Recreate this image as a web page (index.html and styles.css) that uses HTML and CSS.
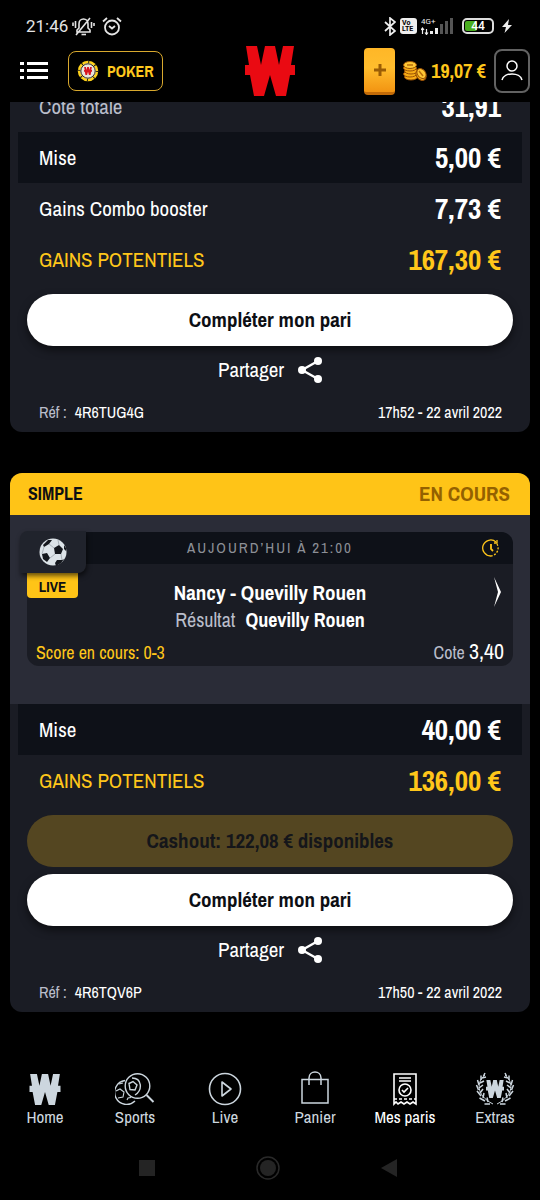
FILE: index.html
```html
<!DOCTYPE html>
<html lang="fr">
<head>
<meta charset="utf-8">
<meta name="viewport" content="width=device-width, initial-scale=1">
<title>Mes paris</title>
<link rel="stylesheet" href="styles.css">
</head>
<body>
<svg class="defs" aria-hidden="true">
  <symbol id="logo" viewBox="0 0 50 50">
    <path d="M1 0H12L16 19L20 0H30L34 19L38 0H49L46 19H50V29H45L41 50H31L25 29L19 50H9L5 29H0V19H4Z"/>
  </symbol>
  <symbol id="share" viewBox="0 0 24 26">
    <path d="M20 4L4 13L20 22" fill="none" stroke="currentColor" stroke-width="2.4"/>
    <circle cx="20" cy="4" r="4"/><circle cx="4" cy="13" r="4"/><circle cx="20" cy="22" r="4"/>
  </symbol>
</svg>

<div class="top">
  <div class="status">
    <span class="clock">21:46</span>
    <svg class="s-bell" viewBox="0 0 23 19" fill="none" stroke="#e4e4e4" stroke-width="1.6">
      <path d="M5 15H18V13L16 11V7C16 4 14 2 11.500 2S7 4 7 7V11L5 13ZM4 18L18 1M1 5.500V9M3.500 4V11M19.500 5V11M22 6V9"/><path d="M9.500 17.500H14"/>
    </svg>
    <svg class="s-alarm" viewBox="0 0 20 19" fill="none" stroke="#e4e4e4" stroke-width="1.8">
      <circle cx="10" cy="10.500" r="7"/><path d="M1 4.500L5 1M19 4.500L15 1M7 9L10 11.500L13 9"/>
    </svg>
    <span class="spacer"></span>
    <svg class="s-bt" viewBox="0 0 12 19" fill="none" stroke="#eee" stroke-width="1.7"><path d="M1 5L11 14L6 18V1L11 5L1 14"/></svg>
    <span class="volte">Vo<br>LTE</span>
    <svg class="s-signal" viewBox="0 0 33 18" fill="#eee">
      <text x="0" y="7" class="net">4G+</text>
      <path d="M1.500 12V17M5.500 17V12M0 13L1.500 11L3 13M4 15.500L5.500 17.500L7 15.500" fill="none" stroke="#eee" stroke-width="1.200"/>
      <path d="M9 14H12V17H9ZM14 11H17V17H14Z"/>
      <path d="M19 7H22V17H19ZM24 4H27V17H24ZM29 1H32V17H29Z" fill="#555"/>
    </svg>
    <span class="battery"><span class="charge"></span><span class="level">44</span></span>
    <svg class="s-bolt" viewBox="0 0 10 14" fill="#eee"><path d="M7 0L0 8H4L2.500 14L10 6H6Z"/></svg>
  </div>

  <header class="bar">
    <div class="left">
      <button class="menu" aria-label="Menu">
        <svg viewBox="0 0 28 20" fill="#fff"><path d="M0 1H4V4H0ZM7 1H28V4H7ZM0 8H4V11H0ZM7 8H28V11H7ZM0 15H4V18H0ZM7 15H28V18H7Z"/></svg>
      </button>
      <button class="poker">
        <svg viewBox="0 0 22 22">
          <circle cx="11" cy="11" r="9" fill="#e8e4dc" stroke="#ffd21a" stroke-width="2.500"/>
          <circle cx="11" cy="11" r="9" fill="none" stroke="#1c1a14" stroke-width="2.500" stroke-dasharray="1 6.070"/>
          <circle cx="11" cy="11" r="7.200" fill="none" stroke="#302b25" stroke-width="1"/>
          <use href="#logo" x="6.500" y="7" width="9" height="8" fill="#d81620"/>
        </svg>
        <span>POKER</span>
      </button>
    </div>
    <svg class="brand" role="img" aria-label="Logo"><use href="#logo"/></svg>
    <div class="account">
      <button class="deposit" aria-label="Déposer">
        <svg viewBox="0 0 14 14"><path d="M7 1V13M1 7H13" stroke="#9b5d05" stroke-width="3" fill="none"/></svg>
      </button>
      <div class="wallet">
        <svg class="coins" viewBox="0 0 24 20">
          <g fill="#f8ad16" stroke="#975006" stroke-width="1">
            <ellipse cx="8" cy="16" rx="6.500" ry="3"/><ellipse cx="7" cy="13" rx="6.500" ry="3"/><ellipse cx="8" cy="10" rx="6.500" ry="3"/><ellipse cx="7" cy="7" rx="6.500" ry="3"/><ellipse cx="7" cy="4" rx="6.500" ry="3.500" fill="#ffc735"/>
            <ellipse cx="18" cy="14" rx="4.500" ry="6" transform="rotate(-38 18 14)"/><ellipse cx="18.500" cy="12.500" rx="4" ry="5.500" transform="rotate(-38 18.500 12.500)" fill="#ffc735"/>
          </g>
          <path d="M4 4H10M16 10L20 15" stroke="#b86e0a" stroke-width="1.500"/>
        </svg>
        <span class="balance">19,07 €</span>
      </div>
      <button class="profile" aria-label="Profil">
        <svg viewBox="0 0 22 22" fill="none" stroke="#fff" stroke-width="1.500"><circle cx="11" cy="6" r="5"/><path d="M1 20C3 12 19 12 21 20"/></svg>
      </button>
    </div>
  </header>
</div>

<main>
  <article class="ticket scrolled">
    <dl class="rows">
      <div class="row soft"><dt>Cote totale</dt><dd>31,91</dd></div>
      <div class="row dark"><dt>Mise</dt><dd>5,00 €</dd></div>
      <div class="row"><dt>Gains Combo booster</dt><dd>7,73 €</dd></div>
      <div class="row gold"><dt>GAINS POTENTIELS</dt><dd>167,30 €</dd></div>
    </dl>
    <div class="actions"><button class="pill">Compléter mon pari</button></div>
    <button class="share">Partager <svg><use href="#share"/></svg></button>
    <footer class="ref"><span class="code"><span class="muted">Réf :</span><span>4R6TUG4G</span></span><time>17h52 - 22 avril 2022</time></footer>
  </article>

  <article class="ticket">
    <header class="ticket-head"><h2>SIMPLE</h2><span class="state">EN COURS</span></header>
    <section class="bets">
      <div class="bet">
        <div class="sport">
          <svg viewBox="0 0 28 28">
            <circle cx="14" cy="14" r="13.500" fill="#dce3e8"/>
            <g fill="#14171d"><path d="M15 10L20 7L24 11L22 16L16 16Z"/><path d="M4 7L9 2L13 2L10 6L5 9Z"/><path d="M3 16L8 15L11 20L8 24L4 21Z"/><path d="M16 25L18 22L23 22L25 21L22 25L17 28Z"/><path d="M25 7L27 10L27 13L25 11Z"/></g>
            <path d="M10 6L15 10M16 16L11 20M22 16L23 22M5 9L3 16M20 7L19 2" stroke="#aab2b9" stroke-width="1" fill="none"/>
          </svg>
        </div>
        <span class="live">LIVE</span>
        <div class="bet-head">
          <span>AUJOURD’HUI À 21:00</span>
          <svg viewBox="0 0 18 18" fill="none" stroke="#ffc61a" stroke-width="1.300"><path d="M9 17A8 8 0 1 1 14 3"/><path d="M15 5A8 8 0 0 1 9 17" stroke-dasharray="2 1.500"/><path d="M12 4H15V1"/><path d="M9 5V10L11 12" stroke-width="1.800"/></svg>
        </div>
        <a class="bet-body" href="#">
          <strong class="teams">Nancy - Quevilly Rouen</strong>
          <span class="pick"><span class="muted">Résultat</span><strong>Quevilly Rouen</strong></span>
          <span class="score"><span>Score en cours: 0-3</span><span class="odds"><span class="muted">Cote</span> <b>3,40</b></span></span>
          <svg class="arrow" viewBox="0 0 8 30"><path d="M1 0L8 15L1 30L5 15Z" fill="#fff"/></svg>
        </a>
      </div>
    </section>
    <dl class="rows">
      <div class="row dark"><dt>Mise</dt><dd>40,00 €</dd></div>
      <div class="row gold"><dt>GAINS POTENTIELS</dt><dd>136,00 €</dd></div>
    </dl>
    <div class="actions">
      <button class="pill cashout" disabled>Cashout: 122,08 € disponibles</button>
      <button class="pill">Compléter mon pari</button>
    </div>
    <button class="share">Partager <svg><use href="#share"/></svg></button>
    <footer class="ref"><span class="code"><span class="muted">Réf :</span><span>4R6TQV6P</span></span><time>17h50 - 22 avril 2022</time></footer>
  </article>
</main>

<nav class="tabs">
  <a href="#"><svg viewBox="0 0 40 36"><use href="#logo" x="4" y="3" width="32" height="31" fill="#ccd6de"/></svg>Home</a>
  <a href="#"><svg viewBox="0 0 40 36" fill="none" stroke="#ccd6de" stroke-width="1.400"><circle cx="22.500" cy="15" r="12.300"/><path d="M31.500 24L38.500 31" stroke-width="2"/><path d="M10 9.500A12 12 0 1 0 20 30M14 12.500L18 10.500L22 14L20 19L15 18.500ZM17 7C27 7 28 19 20 24"/><path d="M1 20L5 18L9 21L8 26L3 27M4 13L8 12M12 29L13 27L16 26.500" stroke-width="1.100"/></svg>Sports</a>
  <a href="#"><svg viewBox="0 0 40 36" fill="none" stroke="#ccd6de" stroke-width="1.600"><circle cx="20" cy="18" r="15.500"/><path d="M17 11V25L26 18Z" stroke-linejoin="round"/></svg>Live</a>
  <a href="#"><svg viewBox="0 0 40 36" fill="none" stroke="#ccd6de" stroke-width="1.500"><path d="M7 8.500H33V32H7ZM14 14V7C14 -1 26 -1 26 7V14"/></svg>Panier</a>
  <a href="#" class="active" aria-current="page"><svg viewBox="0 0 40 36" fill="none" stroke="#fff" stroke-width="1.600"><path d="M9 33V3H31V33L28 31L25 33L22 31L19 33L16 31L13 33L11 31ZM14 7H26M14 10H26"/><circle cx="20" cy="19" r="6"/><path d="M17 19L19 21L23 17"/><path d="M9 28H31" stroke-dasharray="3 2"/></svg>Mes paris</a>
  <a href="#"><svg viewBox="0 0 40 36"><use href="#logo" x="10.500" y="9" width="19" height="18" fill="#ccd6de"/>
    <g id="laurel" fill="none" stroke="#ccd6de" stroke-width="1.500"><path d="M10 4C2 10 0 24 18 33" stroke-width="1"/><path d="M8.500 5L10 2M7 7L11 6M6 9L6 4.500M5 12L9 10M4 14L2.500 9M4 17L8 14M3.500 19L1.500 14M5 22L8 18M6 25L2 20M8 27L9 22M10 30L4.500 27M13 31L12 26.500M15 33L9.500 33"/></g>
    <use href="#laurel" transform="matrix(-1 0 0 1 40 0)"/></svg>Extras</a>
</nav>

<div class="system">
  <button aria-label="Applications récentes"><svg viewBox="0 0 24 24"><path d="M4 4H20V20H4Z"/></svg></button>
  <button aria-label="Accueil"><svg viewBox="0 0 24 24"><circle cx="12" cy="12" r="11" fill="none" stroke="#292929" stroke-width="1.500"/><circle cx="12" cy="12" r="8"/></svg></button>
  <button aria-label="Retour"><svg viewBox="0 0 24 24"><path d="M20 3V21L4 12Z"/></svg></button>
</div>
</body>
</html>
```
FILE: styles.css
```css
* { box-sizing: border-box; }
body { margin: 0; background: #000; color: #fff; font-family: "Archivo Narrow", "Liberation Sans Narrow", "Liberation Sans", sans-serif; font-size: 20px; line-height: 24px; }
button { font: inherit; color: inherit; background: none; border: 0; padding: 0; margin: 0; }
a { color: inherit; text-decoration: none; }
svg { display: block; flex: none; }
dl, dd, h2 { margin: 0; }
.defs { position: absolute; width: 0; height: 0; }
.top { position: relative; z-index: 2; background: #000; }
.status { display: flex; align-items: center; height: 44px; padding: 8px 28px 0 26px; gap: 4px; font-family: Roboto, sans-serif; }
.clock { font-size: 17px; color: #e4e4e4; }
.spacer { flex: 1; }
.s-bell { width: 23px; height: 19px; }
.s-alarm { width: 20px; height: 19px; margin-left: 3px; }
.s-bt { width: 12px; height: 19px; }
.volte { background: #eee; color: #000; border-radius: 3px; font-size: 7px; line-height: 6px; font-weight: 700; padding: 2px; width: 17px; height: 16px; }
.s-signal { width: 33px; height: 18px; }
.net { font: 8px Roboto, sans-serif; }
.battery { position: relative; width: 32px; height: 16px; border: 2px solid #ddd; border-radius: 5px; display: flex; align-items: center; justify-content: center; margin: 0 4px; }
.charge { position: absolute; left: 1px; top: 1px; bottom: 1px; width: 44%; background: #4aae20; border-radius: 2px; }
.level { position: relative; font-size: 12px; line-height: 12px; font-weight: 500; }
.s-bolt { width: 10px; height: 14px; }
.bar { display: grid; grid-template-columns: 1fr auto 1fr; align-items: center; height: 58px; padding: 0 10px 4px; }
.left { display: flex; align-items: center; gap: 20px; padding-left: 10px; }
.menu svg { width: 28px; height: 20px; }
.poker { display: flex; align-items: center; gap: 8px; height: 40px; padding: 0 8px; border: 1px solid #d9a92e; border-radius: 8px; color: #ffc81d; font-size: 16px; font-weight: 700; }
.poker svg { width: 22px; height: 22px; }
.brand { width: 50px; height: 50px; fill: #ea0a12; }
.account { justify-self: end; display: flex; align-items: center; gap: 8px; }
.wallet { display: flex; align-items: center; gap: 4px; }
.deposit { width: 31px; height: 47px; border-radius: 4px; background: linear-gradient(#ffb727, #ffbd2d 45%, #f29412); border-bottom: 3px solid #c36b08; display: grid; place-items: center; }
.deposit svg { width: 14px; height: 14px; }
.coins { width: 24px; height: 20px; }
.balance { color: #ffc61a; font-weight: 700; white-space: nowrap; }
.profile { width: 36px; height: 44px; border: 2px solid #626262; border-radius: 8px; display: grid; place-items: center; }
.profile svg { width: 22px; height: 22px; }
main { padding: 0 10px; display: grid; gap: 41px; }
.ticket { background: #1a1c24; border-radius: 12px; overflow: hidden; display: flex; flex-direction: column; }
.scrolled { margin-top: -21px; }
.rows { padding: 0 8px; }
.row { display: flex; justify-content: space-between; align-items: center; height: 51px; padding: 0 21px; }
.row dt { font-size: 21px; }
.row dd { font-size: 29px; line-height: 32px; font-weight: 700; }
.dark { background: #0e1118; }
.soft dt, .muted { color: #b9bdca; font-weight: 400; }
.gold { color: #ffc61a; }
.actions { display: grid; gap: 7px; padding: 9px 17px 0; }
.pill { height: 52px; border-radius: 26px; background: #fff; color: #0d0f14; font-size: 21px; font-weight: 700; box-shadow: 0 4px 8px #0008; }
.cashout { background: #544621; color: #15161a; box-shadow: none; }
.share { align-self: center; display: flex; align-items: center; gap: 14px; margin-top: 11px; height: 26px; font-size: 21px; }
.share svg { width: 24px; height: 26px; fill: #fff; }
.ref { display: flex; justify-content: space-between; padding: 17px 28px 8px 29px; font-size: 16px; }
.code { display: flex; gap: 8px; }
.ticket-head { background: #ffc417; color: #0d0f14; height: 42px; display: flex; justify-content: space-between; align-items: center; padding: 0 20px 0 18px; }
.ticket-head h2 { font-size: 18px; font-weight: 700; }
.state { color: #946100; font-size: 21px; font-weight: 700; }
.bets { background: #2a2c37; padding: 17px 17px 38px; }
.bet { position: relative; background: #1a1c24; border-radius: 12px; }
.bet-head { display: flex; align-items: center; justify-content: center; height: 32px; background: #0e1118; border-radius: 12px 12px 0 0; color: #8c8f96; font-size: 15px; letter-spacing: 2px; position: relative; }
.bet-head svg { position: absolute; right: 13px; width: 18px; height: 18px; }
.sport { position: absolute; z-index: 2; left: -7px; top: -1px; width: 66px; height: 42px; background: #20232c; border-radius: 8px 0 8px 0; box-shadow: 1px 3px 5px #0009; display: grid; place-items: center; }
.sport svg { width: 28px; height: 28px; }
.live { position: absolute; z-index: 1; left: 0; top: 36px; width: 51px; height: 30px; padding-top: 7px; background: #ffc417; color: #0d0f14; border-radius: 0 0 4px 4px; font-size: 15px; font-weight: 700; text-align: center; }
.bet-body { position: relative; display: flex; flex-direction: column; align-items: center; padding: 15px 9px 0; }
.teams { font-size: 21px; line-height: 27px; }
.pick { display: flex; gap: 10px; line-height: 27px; }
.score { align-self: stretch; display: flex; justify-content: space-between; align-items: baseline; margin-top: 5px; line-height: 27px; color: #ffc61a; font-size: 18px; }
.odds { color: #fff; }
.odds b { font-size: 22px; font-weight: 400; }
.arrow { position: absolute; right: 12px; top: 13px; width: 8px; height: 30px; }
.tabs { display: grid; grid-template-columns: repeat(6, 1fr); margin-top: 59px; color: #ccd6de; font-size: 17px; line-height: 20px; }
.tabs a { display: flex; flex-direction: column; align-items: center; white-space: nowrap; }
.tabs svg { width: 40px; height: 36px; }
.tabs .active { color: #fff; }
.system { display: flex; justify-content: center; gap: 97px; padding: 29px 4px 20px 0; }
.system svg { width: 24px; height: 24px; fill: #242424; }
```
